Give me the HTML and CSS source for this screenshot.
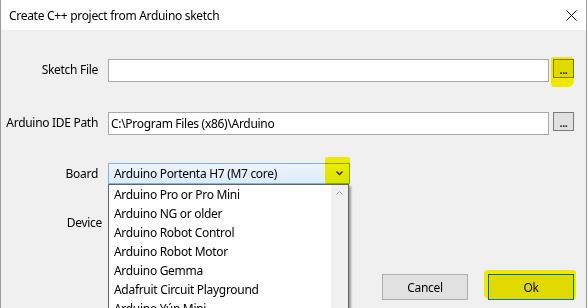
FILE: index.html
```html
<!DOCTYPE html>
<html lang="en">
<head>
  <meta charset="UTF-8" />
  <meta name="viewport" content="width=device-width, initial-scale=1.0"/>
  <title>Create C++ project from Arduino sketch</title>
  <link rel="stylesheet" href="styles.css">
</head>
<body>

  <div class="window">
    <div class="titlebar">
      <span class="title">Create C++ project from Arduino sketch</span>
      <svg class="close" width="11" height="11" viewBox="0 0 11 11">
        <path d="M0.5 0.5 L10.5 10.5 M10.5 0.5 L0.5 10.5" stroke="#000" stroke-width="1" fill="none"/>
      </svg>
    </div>

    <div class="client">
      <div class="row row-sketch">
        <label class="lbl" for="sketch">Sketch File</label>
        <input class="field" type="text" id="sketch">
        <button class="browse">...</button>
      </div>

      <div class="row row-ide">
        <label class="lbl" for="ide">Arduino IDE Path</label>
        <input class="field" type="text" id="ide" value="C:\Program Files (x86)\Arduino">
        <button class="browse">...</button>
      </div>

      <div class="row row-board">
        <label class="lbl">Board</label>
        <div class="combo">
          <span class="combo-text">Arduino Portenta H7 (M7 core)</span>
          <svg class="chevron" width="7" height="5" viewBox="0 0 7 5">
            <path d="M0.5 0.5 L3.5 3.5 L6.5 0.5" stroke="#222" stroke-width="1.3" fill="none"/>
          </svg>
          <div class="droplist">
            <ul class="items">
              <li>Arduino Pro or Pro Mini</li>
              <li>Arduino NG or older</li>
              <li>Arduino Robot Control</li>
              <li>Arduino Robot Motor</li>
              <li>Arduino Gemma</li>
              <li>Adafruit Circuit Playground</li>
              <li>Arduino Yún Mini</li>
            </ul>
            <div class="scrollbar">
              <svg width="7" height="5" viewBox="0 0 7 5">
                <path d="M0.5 4.5 L3.5 1.5 L6.5 4.5" stroke="#a0a0a0" stroke-width="1" fill="none"/>
              </svg>
            </div>
          </div>
        </div>
      </div>

      <div class="row row-device">
        <label class="lbl lbl-device">Device</label>
      </div>

      <div class="actions">
        <button class="btn">Cancel</button>
        <button class="btn btn-ok">Ok</button>
      </div>
    </div>

    <!-- marker highlights drawn over the screenshot -->
    <div class="mark mark-browse"></div>
    <div class="mark mark-combo"></div>
    <div class="mark mark-ok"></div>
  </div>

</body>
</html>
```

FILE: styles.css
```css
body {
  margin: 0;
  background: #fff;
  font-family: "Noto Sans", "Open Sans", Arial, sans-serif;
  font-size: 12px;
  letter-spacing: -0.3px;
  color: #000;
  overflow: hidden;
}
.window {
  position: relative;
  width: 587px;
  height: 308px;
  box-sizing: border-box;
  border-left: 1px solid #9a9a9a;
  border-right: 1px solid #9a9a9a;
  background: #f0f0f0;
  overflow: hidden;
}
.titlebar {
  height: 30px;
  background: #fff;
  display: flex;
  align-items: center;
  justify-content: space-between;
  padding: 0 9px 0 8px;
}
.close {
  display: block;
  margin-top: 1px;
}
.client {
  padding-top: 29px;
}
.row {
  display: flex;
  align-items: center;
  height: 23px;
}
.row-ide {
  margin-top: 30px;
}
.row-board {
  margin-top: 28px;
  height: 21px;
}
.row-device {
  margin-top: 27px;
}
.lbl {
  width: 97px;
  margin-right: 10px;
  text-align: right;
  flex: none;
}
.row-sketch .lbl,
.row-ide .lbl {
  padding-bottom: 3px;
}
.lbl-device {
  width: 101px;
  margin-right: 6px;
}
.field {
  width: 441px;
  height: 23px;
  box-sizing: border-box;
  margin: 0;
  border: 1px solid #a9a9a9;
  background: #fff;
  padding: 0 2px;
  font: inherit;
  letter-spacing: inherit;
  color: #000;
  outline: none;
}
.browse {
  align-self: flex-start;
  width: 21px;
  height: 19px;
  margin: 0 0 0 4px;
  padding: 0;
  border: 1px solid #7a7a7a;
  background: #e1e1e1;
  font: inherit;
  font-size: 11px;
  line-height: 19px;
  font-weight: bold;
  letter-spacing: -0.5px;
  color: #222;
}
.combo {
  position: relative;
  width: 242px;
  height: 21px;
  box-sizing: border-box;
  border: 1px solid #7eb4ea;
  background: linear-gradient(#ecf4fc, #dcecfc);
  display: flex;
  align-items: center;
  justify-content: space-between;
  padding: 0 6px 0 5px;
}
.droplist {
  position: absolute;
  top: 20px;
  left: -1px;
  width: 241px;
  height: 140px;
  box-sizing: border-box;
  border: 1px solid #646464;
  background: #fff;
  display: flex;
  box-shadow: 2px 2px 2px rgba(0, 0, 0, 0.35);
}
.items {
  list-style: none;
  margin: 0;
  padding: 0;
  flex: 1;
}
.items li {
  height: 19px;
  line-height: 19px;
  padding-left: 5px;
  white-space: nowrap;
}
.scrollbar {
  width: 17px;
  background: #f0f0f0;
  display: flex;
  justify-content: center;
  padding-top: 5px;
}
.scrollbar svg {
  display: block;
}
.actions {
  display: flex;
  justify-content: flex-end;
  gap: 20px;
  margin-top: 40px;
  padding-right: 12px;
}
.btn {
  width: 86px;
  height: 26px;
  margin: 0;
  border: 1px solid #adadad;
  background: #e1e1e1;
  font: inherit;
  letter-spacing: inherit;
  color: #000;
}
.btn-ok {
  border-color: #0078d7;
}
.mark {
  position: absolute;
  background: #fff700;
  mix-blend-mode: multiply;
  pointer-events: none;
}
.mark-browse {
  left: 550px;
  top: 57px;
  width: 23px;
  height: 30px;
  border-radius: 2px 4px 6px 3px;
}
.mark-combo {
  left: 324px;
  top: 157px;
  width: 25px;
  height: 27px;
  border-radius: 3px 2px 2px 2px;
}
.mark-ok {
  left: 483px;
  top: 270px;
  width: 92px;
  height: 29px;
  border-radius: 4px 3px 3px 5px;
}
```
